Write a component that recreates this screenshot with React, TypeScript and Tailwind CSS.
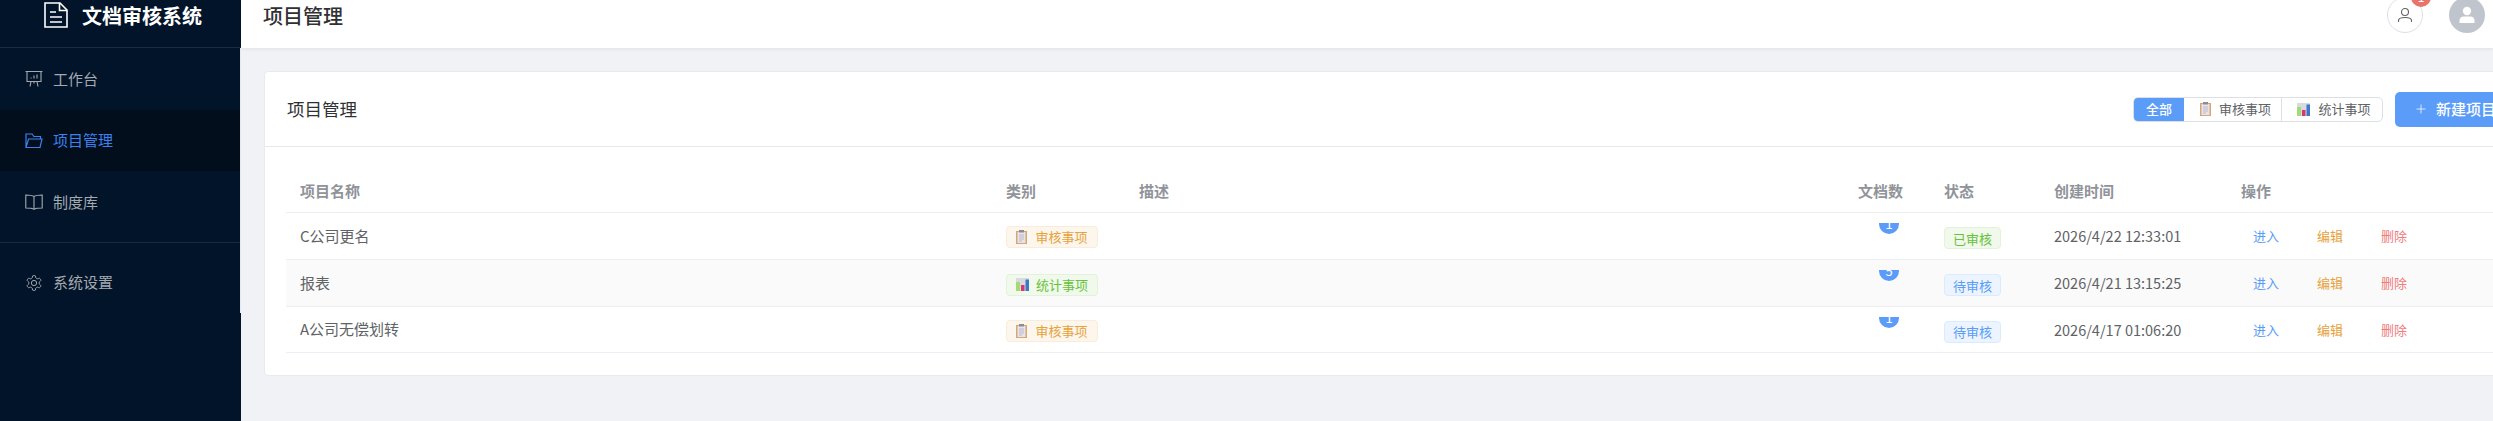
import React from 'react';
import { Plus } from 'lucide-react';

const cjk = "font-['Noto_Sans_CJK_SC','Noto_Sans',sans-serif]";

const ClipboardEmoji = () => (
  <svg width="11" height="14" viewBox="0 0 11 14" className="shrink-0">
    <rect x="0" y="1" width="11" height="13" fill="#d6a775" />
    <rect x="1.5" y="2" width="8" height="11" fill="#e6e3ec" />
    <rect x="3" y="0" width="5" height="2.5" fill="#8f8a94" />
    <path d="M3 5h5M3 7h5M3 9h5M3 11h3" stroke="#b5b0bf" strokeWidth="0.8" />
  </svg>
);

const ChartEmoji = () => (
  <svg width="13" height="13" viewBox="0 0 13 13" className="shrink-0">
    <rect width="13" height="13" fill="#d9d9e0" />
    <rect x="0" y="4" width="4" height="9" fill="#a4d977" />
    <rect x="5" y="7" width="3.5" height="6" fill="#d8386b" />
    <rect x="9.5" y="1.5" width="3.5" height="11.5" fill="#3d78c9" />
  </svg>
);

const BoardIcon = () => (
  <svg width="18" height="18" viewBox="0 0 18 18" fill="none" stroke="currentColor" strokeWidth="1.1">
    <path d="M0.5 1.5h17M2 1.5v10h14v-10M6 11.5l-1 5M12 11.5l1 5M9 11.5v2" />
    <path d="M6 8.5v-1M9 8.5v-3M12 8.5v-4" />
  </svg>
);

const FolderIcon = () => (
  <svg width="18" height="16" viewBox="0 0 18 16" fill="none" stroke="currentColor" strokeWidth="1.2">
    <path d="M1 14.5V1h6l2 2.5h6.5V6M1 14.5h14l2-8.5H3.5L1 14.5z" />
  </svg>
);

const BookIcon = () => (
  <svg width="18" height="16" viewBox="0 0 18 16" fill="none" stroke="currentColor" strokeWidth="1.1">
    <path d="M9 2.5C7 1 4 1 .8 1v13c3.2 0 6.2 0 8.2 1.2 2-1.2 5-1.2 8.2-1.2V1C14 1 11 1 9 2.5zM9 2.5v12.7" />
  </svg>
);

const GearIcon = () => (
  <svg width="18" height="18" viewBox="0 0 24 24" fill="none" stroke="currentColor" strokeWidth="1.3">
    <path d="M12.22 2h-.44a2 2 0 0 0-2 2v.18a2 2 0 0 1-1 1.73l-.43.25a2 2 0 0 1-2 0l-.15-.08a2 2 0 0 0-2.73.73l-.22.38a2 2 0 0 0 .73 2.73l.15.1a2 2 0 0 1 1 1.72v.51a2 2 0 0 1-1 1.74l-.15.09a2 2 0 0 0-.73 2.73l.22.38a2 2 0 0 0 2.73.73l.15-.08a2 2 0 0 1 2 0l.43.25a2 2 0 0 1 1 1.73V20a2 2 0 0 0 2 2h.44a2 2 0 0 0 2-2v-.18a2 2 0 0 1 1-1.73l.43-.25a2 2 0 0 1 2 0l.15.08a2 2 0 0 0 2.73-.73l.22-.39a2 2 0 0 0-.73-2.73l-.15-.08a2 2 0 0 1-1-1.74v-.5a2 2 0 0 1 1-1.74l.15-.09a2 2 0 0 0 .73-2.73l-.22-.38a2 2 0 0 0-2.73-.73l-.15.08a2 2 0 0 1-2 0l-.43-.25a2 2 0 0 1-1-1.73V4a2 2 0 0 0-2-2z" />
    <circle cx="12" cy="12" r="3.5" />
  </svg>
);

const navClass = 'flex h-[61px] items-center gap-[10px] pl-[25px] text-[15px]';

const Sidebar = () => (
  <aside className="flex h-full w-[241px] shrink-0 flex-col bg-[#011429]">
    <div className="flex h-[48px] shrink-0 border-b border-[#1c2a3d] pl-[44px] pt-[2px]">
      <svg width="24" height="26" viewBox="0 0 24 26" fill="none" stroke="#ffffff" strokeWidth="1.6" className="shrink-0">
        <path d="M1 1h15l7 7v17H1z" />
        <path d="M15.5 1v7.5H23" />
        <path d="M6 10h6M6 15h12M6 20h12" />
      </svg>
      <span className="ml-[14px] mt-[-1px] text-[20px] font-bold leading-[30px] text-white">文档审核系统</span>
    </div>
    <nav className="flex-none border-r border-[#e4e8ef] text-[#a5a9b0]">
      <div className={`${navClass} h-[62px]`}>
        <BoardIcon />
        <span>工作台</span>
      </div>
      <div className={`${navClass} bg-[#020e1c] text-[#3b82f0]`}>
        <FolderIcon />
        <span>项目管理</span>
      </div>
      <div className={`${navClass} h-[62px]`}>
        <BookIcon />
        <span>制度库</span>
      </div>
      <div className="my-[9px] border-t border-[#1c2a3d]" />
      <div className={navClass}>
        <GearIcon />
        <span>系统设置</span>
      </div>
    </nav>
  </aside>
);

const Header = () => (
  <header className="flex h-[48px] shrink-0 items-start bg-white pl-[22px] pr-[8px] shadow-[0_1px_4px_rgba(0,0,0,0.08)]">
    <span className="mt-[1px] text-[20px] font-medium leading-[30px] text-[#303133]">项目管理</span>
    <div className="ml-auto flex -mt-[3px] items-center gap-[26px]">
      <div className="relative flex h-[36px] w-[36px] items-center justify-center rounded-full border border-[#dcdfe6] bg-white text-[#606266]">
        <svg width="16" height="16" viewBox="0 0 16 16" fill="none" stroke="currentColor" strokeWidth="1.1">
          <circle cx="8" cy="5" r="3.5" />
          <path d="M1.5 15v-1.5c0-2 2-3 6.5-3s6.5 1 6.5 3V15" />
        </svg>
        <span className="absolute -right-[9px] -top-[11px] h-[20px] w-[20px] overflow-hidden rounded-full bg-[#e9736a] text-center text-[12px] leading-[20px] text-white">1</span>
      </div>
      <div className="flex h-[36px] w-[36px] items-center justify-center rounded-full bg-[#c0c4cc]">
        <svg width="18" height="18" viewBox="0 0 18 18" fill="#ffffff">
          <circle cx="9" cy="5" r="4.2" />
          <path d="M1.5 17v-2.5c0-2.5 2-4 4-4h7c2 0 4 1.5 4 4V17z" />
        </svg>
      </div>
    </div>
  </header>
);

const CategoryTag = ({ kind }: { kind: 'audit' | 'stat' }) =>
  kind === 'audit' ? (
    <span className="inline-flex h-[22px] w-[92px] items-center justify-center gap-[8px] rounded-[4px] border border-[#faecd8] bg-[#fdf6ec] text-[13px] text-[#e6a23c]">
      <ClipboardEmoji />
      审核事项
    </span>
  ) : (
    <span className="inline-flex h-[22px] w-[92px] items-center justify-center gap-[7px] rounded-[4px] border border-[#e1f3d8] bg-[#f0f9eb] text-[13px] text-[#67c23a]">
      <ChartEmoji />
      统计事项
    </span>
  );

const StatusTag = ({ done }: { done: boolean }) => (
  <span
    className={
      done
        ? 'inline-flex h-[22px] w-[57px] items-center justify-center rounded-[4px] border border-[#e1f3d8] bg-[#f0f9eb] text-[13px] text-[#67c23a]'
        : 'inline-flex h-[22px] w-[57px] items-center justify-center rounded-[4px] border border-[#d9ecff] bg-[#ecf5ff] text-[13px] text-[#5a9cf8]'
    }
  >
    {done ? '已审核' : '待审核'}
  </span>
);

const rows = [
  { name: 'C公司更名', kind: 'audit' as const, docs: 1, done: true, time: '2026/4/22 12:33:01', h: 'h-[47px]' },
  { name: '报表', kind: 'stat' as const, docs: 5, done: false, time: '2026/4/21 13:15:25', h: 'h-[47px]' },
  { name: 'A公司无偿划转', kind: 'audit' as const, docs: 1, done: false, time: '2026/4/17 01:06:20', h: 'h-[46px]' },
];

const headCell = 'h-[47px] border-b border-[#ebeef5] pl-[14px] pt-[5px] text-left align-middle text-[15px] font-bold text-[#909399]';
const bodyCell = 'border-b border-[#ebeef5] pl-[14px] align-middle';

const ProjectTable = () => (
  <table className="w-[2300px] table-fixed border-separate border-spacing-0">
    <colgroup>
      <col className="w-[706px]" />
      <col className="w-[133px]" />
      <col className="w-[719px]" />
      <col className="w-[86px]" />
      <col className="w-[110px]" />
      <col className="w-[187px]" />
      <col />
    </colgroup>
    <thead>
      <tr>
        <th className={headCell}>项目名称</th>
        <th className={headCell}>类别</th>
        <th className={headCell}>描述</th>
        <th className={headCell}>文档数</th>
        <th className={headCell}>状态</th>
        <th className={headCell}>创建时间</th>
        <th className={headCell}>操作</th>
      </tr>
    </thead>
    <tbody>
      {rows.map((row, i) => (
        <tr key={row.name} className={`${row.h} ${i === 1 ? 'bg-[#fafafa]' : ''}`}>
          <td className={`${bodyCell} text-[15px] text-[#606266]`}>{row.name}</td>
          <td className={`${bodyCell} pt-[2px]`}>
            <CategoryTag kind={row.kind} />
          </td>
          <td className={bodyCell} />
          <td className={`${bodyCell} align-top`}>
            <div className="relative ml-[21px] mt-[10px] h-[11px] w-[20px] overflow-hidden">
              <span className="absolute bottom-0 left-0 h-[20px] w-[20px] rounded-full bg-[#5a9cf8] text-center text-[13px] leading-[20px] text-white">
                {row.docs}
              </span>
            </div>
          </td>
          <td className={`${bodyCell} pt-[2px]`}>
            <StatusTag done={row.done} />
          </td>
          <td className={`${bodyCell} whitespace-nowrap text-[14.5px] text-[#606266]`}>{row.time}</td>
          <td className={`${bodyCell} text-[13px]`}>
            <div className="ml-[12px] flex gap-[38px]">
              <span className="text-[#5a9cf8]">进入</span>
              <span className="text-[#e6a23c]">编辑</span>
              <span className="text-[#f07c7c]">删除</span>
            </div>
          </td>
        </tr>
      ))}
    </tbody>
  </table>
);

const Toolbar = () => (
  <div className="ml-auto flex shrink-0 items-center gap-[12px]">
    <div className="flex h-[25px] w-[250px] shrink-0 overflow-hidden rounded-[5px] border border-[#dcdfe6] text-[13px] text-[#606266]">
      <span className="flex w-[50px] items-center justify-center bg-[#5a9cf8] font-medium text-white">全部</span>
      <span className="flex w-[98px] items-center justify-center gap-[8px] border-r border-[#dcdfe6] pl-[6px]">
        <ClipboardEmoji />
        审核事项
      </span>
      <span className="flex flex-1 items-center justify-center gap-[8px] pl-[4px]">
        <ChartEmoji />
        统计事项
      </span>
    </div>
    <div className="flex h-[35px] w-[120px] shrink-0 items-center gap-[8px] rounded-[5px] bg-[#5a9cf8] pl-[19px] text-[15px] font-medium text-white">
      <Plus size={14} strokeWidth={1.3} className="shrink-0" />
      <span className="whitespace-nowrap">新建项目</span>
    </div>
  </div>
);

export default function App() {
  return (
    <div className={`flex h-[421px] w-full overflow-hidden bg-[#f0f2f5] ${cjk}`}>
      <Sidebar />
      <main className="flex min-w-0 flex-1 flex-col overflow-hidden">
        <Header />
        <div className="flex-1 overflow-hidden pl-[23px] pt-[23px]">
          <section className="h-[305px] w-[2300px] rounded-[4px] border border-[#e8eaef] bg-white">
            <div className="flex h-[75px] items-center border-b border-[#e6e8ef] pl-[22px] pr-[48px]">
              <h2 className="text-[17.5px] font-normal text-[#303133]">项目管理</h2>
              <Toolbar />
            </div>
            <div className="pl-[21px] pt-[19px]">
              <ProjectTable />
            </div>
          </section>
        </div>
      </main>
    </div>
  );
}
